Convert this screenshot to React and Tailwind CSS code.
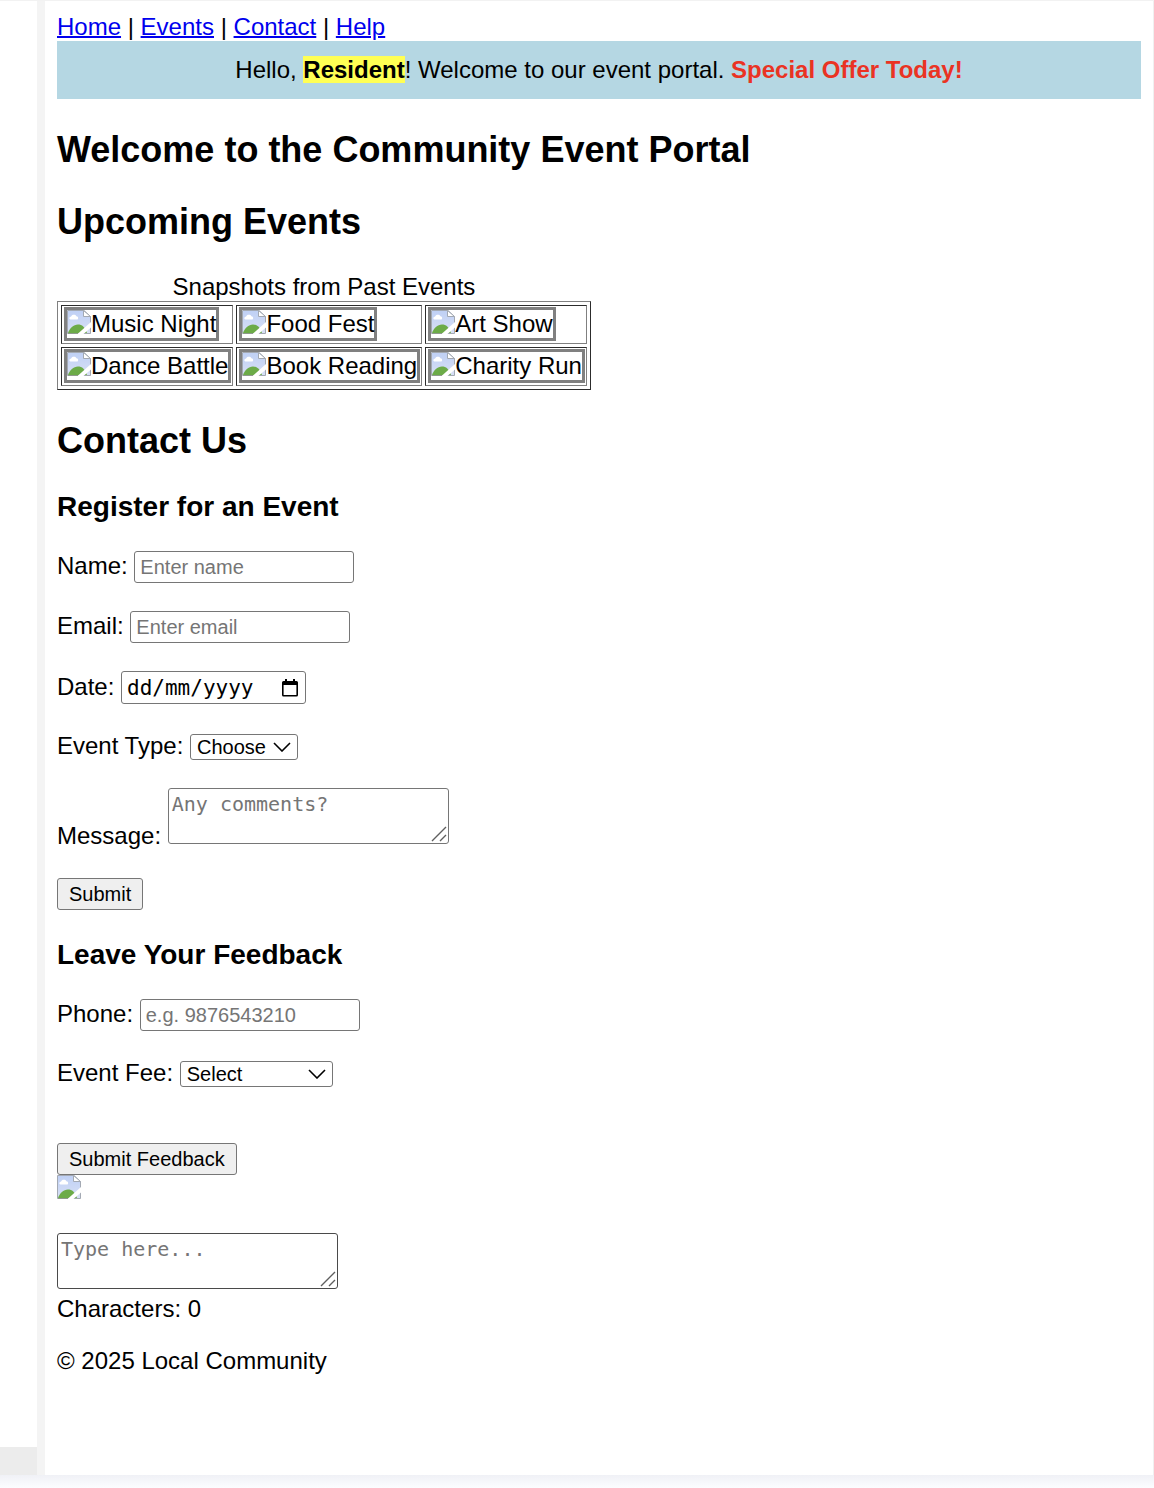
import { useState } from 'react';

const links = ['Home', 'Events', 'Contact', 'Help'];
const photos = [
  ['Music Night', 'Food Fest', 'Art Show'],
  ['Dance Battle', 'Book Reading', 'Charity Run'],
];

function BrokenImage() {
  return (
    <svg viewBox="0 0 24 24" className="block size-6 shrink-0" aria-hidden="true">
      <defs>
        <linearGradient id="sky" x1="0" y1="0" x2="0" y2="1">
          <stop offset="0" stopColor="#bfd0f5" />
          <stop offset="1" stopColor="#d8e0f5" />
        </linearGradient>
      </defs>
      <path d="M.5.5H17l6.5 6V23.5H.5Z" fill="url(#sky)" stroke="#a3a9b3" strokeWidth="1" />
      <path d="M3.500 9.500C1.800 9.500 2 6.800 4 6.800 4.500 4.200 8.700 4.200 9.300 6.200c2.200-.2 2.500 3.300.7 3.300Z" fill="#fff" />
      <path d="M1 23c1.500-4.500 5.500-8.500 10-8.500 4 0 7 2.500 9 8.500Z" fill="#6cab48" />
      <path d="M10.500 24 24 12v5.500L16.500 24Z" fill="#fff" />
      <path d="M16.500.5v6h7Z" fill="#fff" stroke="#a3a9b3" strokeWidth="1" strokeLinejoin="round" />
      <path d="M1 23.500h10" stroke="#8f9a8c" strokeWidth="1" />
    </svg>
  );
}

function Field({ id, label, ...rest }) {
  return (
    <div className="flex items-center">
      <label htmlFor={id} className="pb-[2px] whitespace-pre">{label + ': '}</label>
      <input
        id={id}
        className="h-8 w-[220px] rounded-[3px] border border-[#767676] bg-white px-[5px] text-[20px] leading-6 placeholder:text-[#757575]"
        {...rest}
      />
    </div>
  );
}

function SelectField({ id, label, options, width }) {
  return (
    <div className="flex items-end">
      <label htmlFor={id} className="whitespace-pre">{label + ': '}</label>
      <div className={'relative ' + width}>
        <select
          id={id}
          className="block h-[26px] w-full appearance-none rounded-[3px] border border-[#767676] bg-white pl-[6px] text-[20px] leading-6"
        >
          {options.map((o) => <option key={o}>{o}</option>)}
        </select>
        <svg viewBox="0 0 18 10" className="pointer-events-none absolute top-2 right-[7px] h-[10px] w-[18px]" fill="none" stroke="#000" strokeWidth="1.600" aria-hidden="true">
          <path d="M1 1 9 9 17 1" />
        </svg>
      </div>
    </div>
  );
}

function TextArea({ border, ...rest }) {
  return (
    <div className="relative h-14 w-[281px]">
      <textarea
        className={'block h-14 w-full resize-none rounded-[3px] border bg-white px-[3px] py-[3px] font-["DejaVu_Sans_Mono",monospace] text-[20px] leading-6 placeholder:text-[#757575] ' + border}
        {...rest}
      />
      <svg viewBox="0 0 16 16" className="pointer-events-none absolute right-[2px] bottom-[2px] size-4" fill="none" stroke="#5f5f5f" strokeWidth="1.400" aria-hidden="true">
        <path d="M1 15 15 1M9 15l6-6" />
      </svg>
    </div>
  );
}

const buttonClass = 'block h-8 rounded-[3px] border border-[#767676] bg-[#efefef] px-[11px] text-[20px] leading-6';

export default function App() {
  const [text, setText] = useState('');
  return (
    <div className='flex min-h-screen flex-col bg-white font-["Liberation_Sans",Arial,sans-serif] text-[24px] leading-7 text-black'>
      <div className="flex flex-1 border-t border-[#f2f2f2] bg-[#f4f4f4]">
        <aside className="mr-2 flex w-[37px] shrink-0 flex-col bg-white">
          <div className="mt-auto h-7 bg-[#ececec]" />
        </aside>
        <div className="min-w-0 flex-1 border-r border-[#f0f0f0] bg-white p-3">
          <nav className="h-7">
            {links.map((l, i) => (
              <span key={l}>
                {i > 0 && ' | '}
                <a href={'#' + l.toLowerCase()} className="text-[#0000ee] underline decoration-2">{l}</a>
              </span>
            ))}
          </nav>
          <div className="bg-[#b5d7e3] p-[15px] text-center">
            Hello, <b className="bg-[#ffff54]">Resident</b>! Welcome to our event portal.{' '}
            <b className="text-[#ea3323]">Special Offer Today!</b>
          </div>
          <h1 className="mt-[30px] text-[36px] leading-[42px] font-bold">Welcome to the Community Event Portal</h1>
          <h2 id="events" className="my-[30px] text-[36px] leading-[42px] font-bold">Upcoming Events</h2>

          <table className="border-separate border-spacing-[3px] border border-t-[#808080] border-r-[#2c2c2c] border-b-[#2c2c2c] border-l-[#808080]">
            <caption>Snapshots from Past Events</caption>
            <tbody>
              {photos.map((row) => (
                <tr key={row[0]}>
                  {row.map((name) => (
                    <td key={name} className="border border-t-[#2c2c2c] border-r-[#808080] border-b-[#808080] border-l-[#2c2c2c] pt-px pr-px pb-[2px] pl-[2px]">
                      <div className="flex w-fit border-3 border-[#808080] whitespace-nowrap">
                        <BrokenImage />
                        {name}
                      </div>
                    </td>
                  ))}
                </tr>
              ))}
            </tbody>
          </table>

          <h2 id="contact" className="mt-[30px] mb-7 text-[36px] leading-[42px] font-bold">Contact Us</h2>

          <h3 className="my-7 text-[28px] leading-[33px] font-bold">Register for an Event</h3>
          <form className="flex flex-col items-start gap-7" onSubmit={(e) => e.preventDefault()}>
            <Field id="name" label="Name" placeholder="Enter name" />
            <Field id="email" label="Email" type="email" placeholder="Enter email" />
            <div className="flex items-center">
              <label htmlFor="date" className="pb-[2px] whitespace-pre">{'Date: '}</label>
              <div className="relative w-[185px]">
                <input
                  id="date"
                  placeholder="dd/mm/yyyy"
                  className='block h-[33px] w-full rounded-[3px] border border-[#767676] bg-white pl-[5px] font-["DejaVu_Sans_Mono",monospace] text-[21px] leading-6 placeholder:text-black'
                />
                <svg viewBox="0 0 18 18" className="pointer-events-none absolute top-2 right-[7px] size-[18px]" aria-hidden="true">
                  <path d="M4 0h2v2h6V0h2v2h1.500Q17 2 17 3.500v12.500Q17 17.500 15.500 17.500H2.500Q1 17.500 1 16V3.500Q1 2 2.500 2H4ZM2.600 6v9.900h12.800V6Z" fillRule="evenodd" />
                </svg>
              </div>
            </div>
            <SelectField id="type" label="Event Type" options={['Choose']} width="w-[108px]" />
            <div className="flex pb-[6px]">
              <label htmlFor="message" className="-mb-[6px] self-end whitespace-pre">{'Message: '}</label>
              <TextArea id="message" placeholder="Any comments?" border="border-[#767676]" />
            </div>
            <button type="submit" className={buttonClass}>Submit</button>
          </form>

          <h3 className="my-7 text-[28px] leading-[33px] font-bold">Leave Your Feedback</h3>
          <form className="flex flex-col items-start gap-7" onSubmit={(e) => e.preventDefault()}>
            <Field id="phone" label="Phone" type="tel" placeholder="e.g. 9876543210" />
            <SelectField id="fee" label="Event Fee" options={['Select']} width="w-[153px]" />
            <button type="submit" className={buttonClass + ' mt-7'}>Submit Feedback</button>
          </form>
          <div className="mb-[34px]"><BrokenImage /></div>
          <TextArea
            aria-label="Feedback"
            placeholder="Type here..."
            border="border-[#4a4a4a]"
            value={text}
            onChange={(e) => setText(e.target.value)}
          />
          <p className="mt-[6px]">Characters: {text.length}</p>
          <footer className="mt-6">© 2025 Local Community</footer>
        </div>
      </div>
      <div className="h-[13px] bg-linear-to-b from-[#f0f1f6] to-[#fcfdff]" />
    </div>
  );
}
